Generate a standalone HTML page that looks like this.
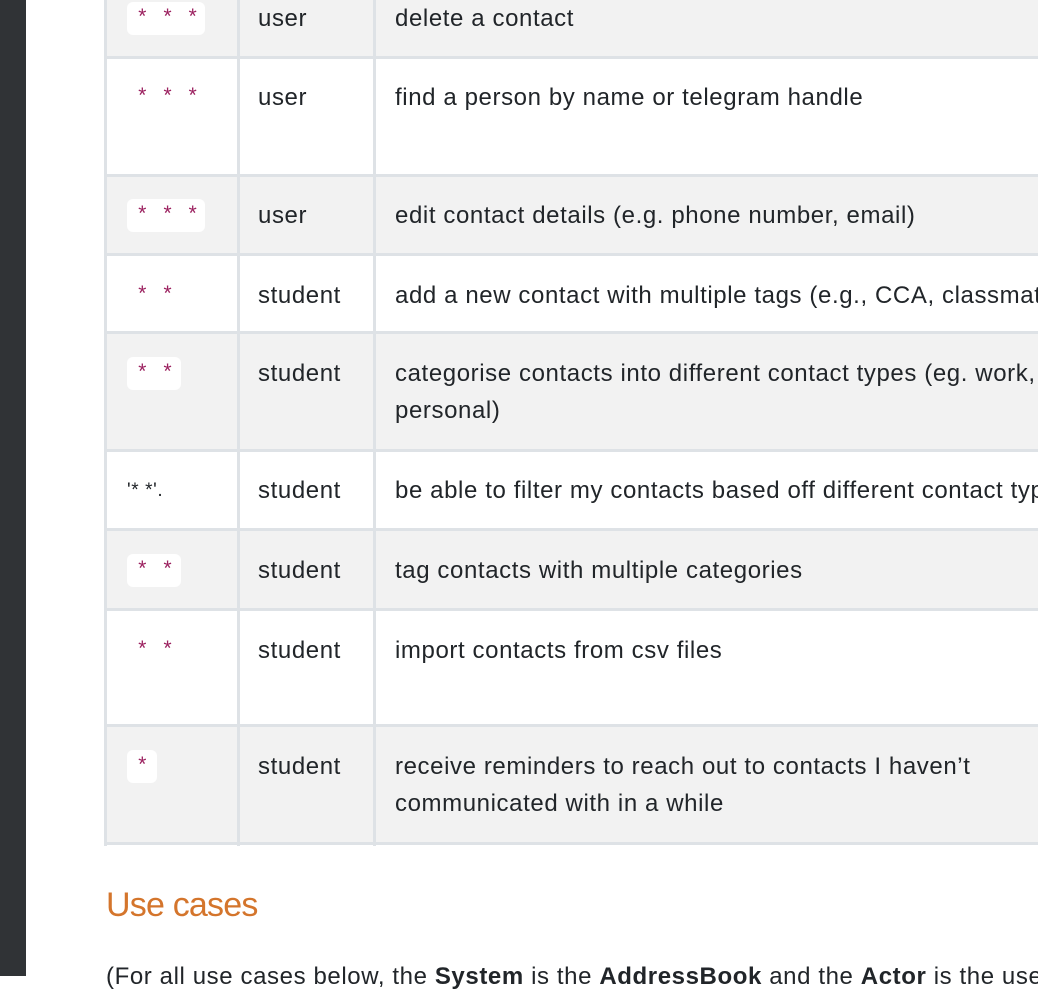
<!DOCTYPE html>
<html><head><meta charset="utf-8"><style>
body{margin:0;width:1038px;height:976px;overflow:hidden;background:#fff;position:relative;font-family:"Liberation Sans",sans-serif;color:#212529}
.side{position:absolute;left:0;top:0;width:26px;height:976px;background:#303336}
.row{position:absolute;left:105px;width:933px;}
.g{background:#f2f2f2}
.hl{position:absolute;left:105px;width:933px;height:3px;background:#dee2e6}
.vl{position:absolute;top:0;width:3px;height:846px;background:#dee2e6}
.t{position:absolute;font-size:24px;letter-spacing:0.6px;line-height:37px;white-space:nowrap}
.c{position:absolute;font-family:"Liberation Mono",monospace;font-size:21px;color:#9c2260;background:#fff;border-radius:6px;padding:0 0 0 9px;height:33px;line-height:36px;letter-spacing:0px;box-sizing:border-box;white-space:pre}
.cn{background:transparent}
h2{position:absolute;left:106px;top:886px;margin:0;font-size:34px;letter-spacing:-0.8px;font-weight:normal;color:#d4752c;font-family:"Liberation Sans",sans-serif}
</style></head><body>
<div class="side"></div>
<div class="row g" style="top:0;height:57px"></div>
<div class="row g" style="top:175px;height:79px"></div>
<div class="row g" style="top:332px;height:118px"></div>
<div class="row g" style="top:529px;height:80px"></div>
<div class="row g" style="top:725px;height:118px"></div>
<div class="hl" style="top:56px"></div><div class="hl" style="top:174px"></div><div class="hl" style="top:253px"></div><div class="hl" style="top:331px"></div><div class="hl" style="top:449px"></div><div class="hl" style="top:528px"></div><div class="hl" style="top:608px"></div><div class="hl" style="top:724px"></div><div class="hl" style="top:842px"></div>
<div class="vl" style="left:104px"></div><div class="vl" style="left:237px"></div><div class="vl" style="left:373px"></div>

<div class="c" style="left:127px;top:2px;width:78px">* * *</div><div class="t" style="left:258px;top:0">user</div><div class="t" style="left:395px;top:0">delete a contact</div>
<div class="c cn" style="left:127px;top:81px;width:78px">* * *</div><div class="t" style="left:258px;top:79px">user</div><div class="t" style="left:395px;top:79px">find a person by name or telegram handle</div>
<div class="c" style="left:127px;top:199px;width:78px">* * *</div><div class="t" style="left:258px;top:197px">user</div><div class="t" style="left:395px;top:197px">edit contact details (e.g. phone number, email)</div>
<div class="c cn" style="left:127px;top:279px;width:54px">* *</div><div class="t" style="left:258px;top:277px">student</div><div class="t" style="left:395px;top:277px">add a new contact with multiple tags (e.g., CCA, classmates)</div>
<div class="c" style="left:127px;top:357px;width:54px">* *</div><div class="t" style="left:258px;top:355px">student</div><div class="t" style="left:395px;top:355px">categorise contacts into different contact types (eg. work,<br>personal)</div>
<div class="t" style="left:127px;top:472px;font-size:19px">'* *'.</div><div class="t" style="left:258px;top:472px">student</div><div class="t" style="left:395px;top:472px">be able to filter my contacts based off different contact types</div>
<div class="c" style="left:127px;top:554px;width:54px">* *</div><div class="t" style="left:258px;top:552px">student</div><div class="t" style="left:395px;top:552px">tag contacts with multiple categories</div>
<div class="c cn" style="left:127px;top:634px;width:54px">* *</div><div class="t" style="left:258px;top:632px">student</div><div class="t" style="left:395px;top:632px">import contacts from csv files</div>
<div class="c" style="left:127px;top:750px;width:30px">*</div><div class="t" style="left:258px;top:748px">student</div><div class="t" style="left:395px;top:748px">receive reminders to reach out to contacts I haven’t<br>communicated with in a while</div>
<h2>Use cases</h2>
<div class="t" style="left:106px;top:958px">(For all use cases below, the <b>System</b> is the <b>AddressBook</b> and the <b>Actor</b> is the user)</div>
</body></html>
